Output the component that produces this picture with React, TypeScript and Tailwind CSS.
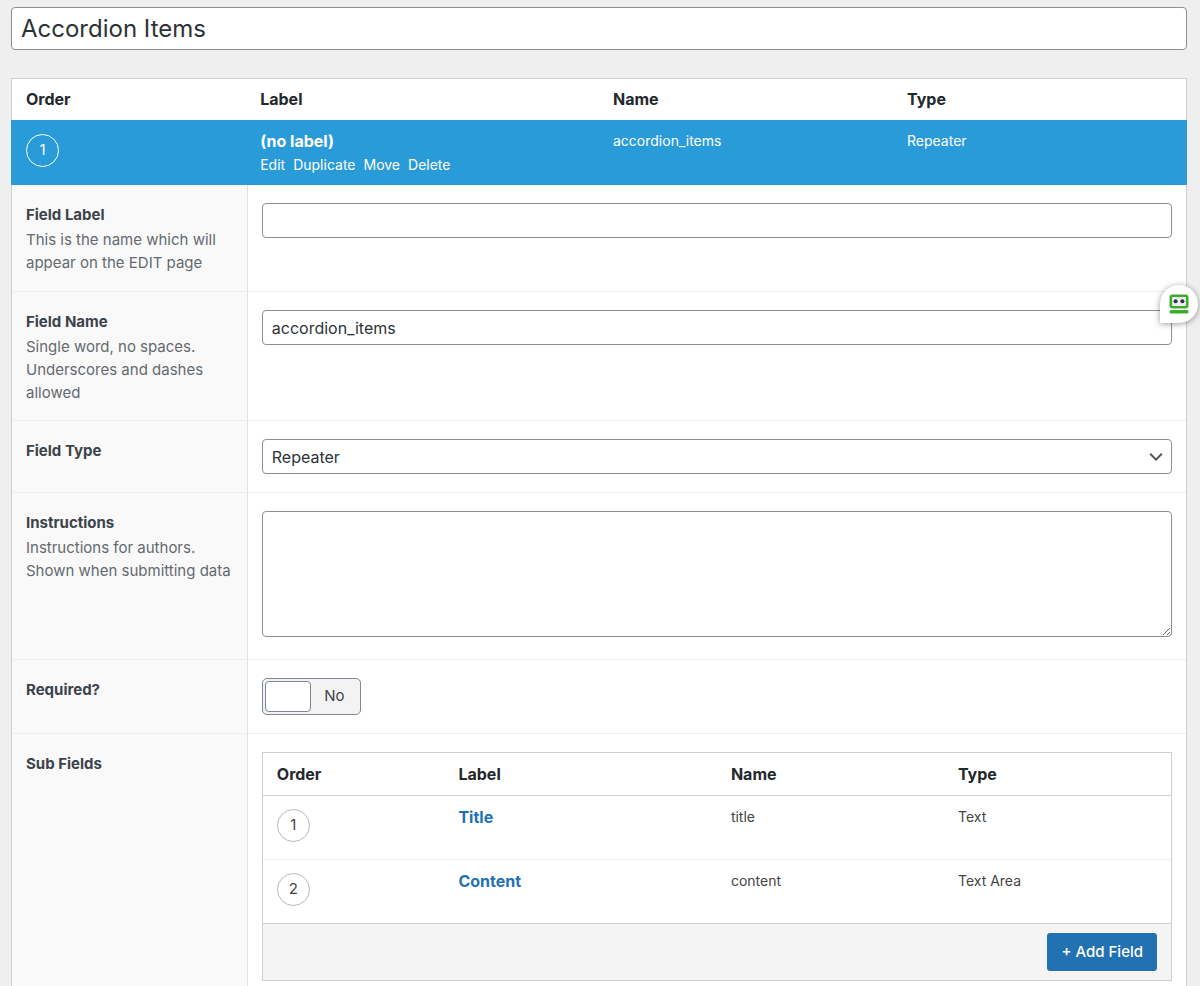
import React, { useState } from "react";

type SubField = {
  label: string;
  name: string;
  type: string;
};

const subFields: SubField[] = [
  { label: "Title", name: "title", type: "Text" },
  { label: "Content", name: "content", type: "Text Area" },
];

const rowActions = ["Edit", "Duplicate", "Move", "Delete"];

const inputClass =
  "block w-full h-[35px] rounded border border-[#8c8f94] bg-white px-[9px] text-base text-[#2c3338]";

const Columns: React.FC = () => (
  <colgroup>
    <col className="w-[20%]" />
    <col className="w-[30%]" />
    <col className="w-[25%]" />
    <col className="w-[25%]" />
  </colgroup>
);

const OrderBadge: React.FC<{ order: number; active?: boolean }> = ({ order, active }) => (
  <span
    className={
      active
        ? "flex size-[33px] items-center justify-center rounded-full border border-white text-[15px] text-white"
        : "flex size-[33px] items-center justify-center rounded-full border border-[#b4b9be] text-[15px] text-[#444444]"
    }
  >
    {order}
  </span>
);

type SettingProps = {
  label: string;
  htmlFor?: string;
  description?: string;
  className: string;
  children: React.ReactNode;
};

const Setting: React.FC<SettingProps> = ({ label, htmlFor, description, className, children }) => (
  <div className={`flex border-b border-[#eeeeee] ${className}`}>
    <div className="w-[calc(20%+1px)] shrink-0 border-r border-[#e1e1e1] bg-[#f9f9f9] pt-[18px] pr-3 pl-3.5 text-[15px] text-[#3c434a]">
      <label htmlFor={htmlFor} className="block leading-[23px] font-bold">
        {label}
      </label>
      {description && <p className="mt-0.5 leading-[23px] text-[#646970]">{description}</p>}
    </div>
    <div className="min-w-0 flex-1 px-3.5 pt-[18px]">{children}</div>
  </div>
);

const RobotBadge: React.FC = () => (
  <button
    type="button"
    aria-label="Fill form"
    className="absolute top-[285px] right-0.5 flex size-[38px] items-center justify-center rounded-full rounded-bl-none bg-white shadow-[0_1px_6px_rgba(0,0,0,0.4)]"
  >
    <svg width="20" height="20" viewBox="0 0 20 20" fill="none">
      <rect x="1.800" y="1.800" width="16.400" height="11.400" rx="1.600" fill="#ececf2" stroke="#3dae2b" strokeWidth="2.600" />
      <circle cx="6.600" cy="7.300" r="2" fill="#2d3440" />
      <circle cx="13.400" cy="7.300" r="2" fill="#2d3440" />
      <rect x="0.500" y="16" width="19" height="3.600" rx="1.600" fill="#3dae2b" />
    </svg>
  </button>
);

const App: React.FC = () => {
  const [title, setTitle] = useState("Accordion Items");
  const [fieldLabel, setFieldLabel] = useState("");
  const [fieldName, setFieldName] = useState("accordion_items");
  const [fieldType, setFieldType] = useState("repeater");
  const [required, setRequired] = useState(false);

  return (
    <div className="relative h-screen overflow-hidden bg-[#efefef] pt-[7px] pr-[13px] pl-[11px] font-['Inter',sans-serif] text-[#444444]">
      <input
        type="text"
        aria-label="Field group title"
        value={title}
        onChange={(e) => setTitle(e.target.value)}
        className="block h-[43px] w-full rounded border border-[#8c8f94] bg-white px-[9px] text-2xl text-[#2c3338]"
      />

      {/* Field list */}
      <table className="mt-7 w-full table-fixed border-separate border-spacing-0 text-left">
        <Columns />
        <thead>
          <tr className="h-[42px] bg-white text-base text-[#23282d] [&>th]:border-t [&>th]:border-[#ccd0d4] [&>th]:px-3.5 [&>th]:pb-px [&>th]:font-bold">
            <th className="border-l">Order</th>
            <th>Label</th>
            <th>Name</th>
            <th className="border-r">Type</th>
          </tr>
        </thead>
        <tbody>
          <tr className="h-[65px] bg-[#2a9bd9] align-top text-white [&>td]:border-[#2a9bd9] [&>td]:px-3.5">
            <td className="border-l pt-3.5">
              <OrderBadge order={1} active />
            </td>
            <td className="pt-2.5">
              <strong className="block text-base leading-[22px] font-bold">(no label)</strong>
              <div className="mt-0.5 flex gap-2 text-sm leading-[22px]">
                {rowActions.map((action) => (
                  <a key={action} href="#">
                    {action}
                  </a>
                ))}
              </div>
            </td>
            <td className="pt-2.5 text-sm leading-[22px]">accordion_items</td>
            <td className="border-r pt-2.5 text-sm leading-[22px]">Repeater</td>
          </tr>
        </tbody>
      </table>

      {/* Field settings */}
      <div className="border-x border-[#ccd0d4] bg-white">
        <Setting
          label="Field Label"
          htmlFor="field-label"
          description="This is the name which will appear on the EDIT page"
          className="h-[107px]"
        >
          <input
            id="field-label"
            type="text"
            value={fieldLabel}
            onChange={(e) => setFieldLabel(e.target.value)}
            className={inputClass}
          />
        </Setting>

        <Setting
          label="Field Name"
          htmlFor="field-name"
          description="Single word, no spaces. Underscores and dashes allowed"
          className="h-[129px]"
        >
          <input
            id="field-name"
            type="text"
            value={fieldName}
            onChange={(e) => setFieldName(e.target.value)}
            className={inputClass}
          />
        </Setting>

        <Setting label="Field Type" htmlFor="field-type" className="h-[72px]">
          <div className="relative">
            <select
              id="field-type"
              value={fieldType}
              onChange={(e) => setFieldType(e.target.value)}
              className={`${inputClass} appearance-none`}
            >
              <option value="repeater">Repeater</option>
              <option value="text">Text</option>
              <option value="textarea">Text Area</option>
            </select>
            <svg
              className="pointer-events-none absolute top-2.5 right-2 size-4"
              viewBox="0 0 16 16"
              fill="none"
              stroke="#50575e"
              strokeWidth="2"
            >
              <path d="M2.200 4.800 8 10.600l5.800-5.800" />
            </svg>
          </div>
        </Setting>

        <Setting
          label="Instructions"
          htmlFor="instructions"
          description="Instructions for authors. Shown when submitting data"
          className="h-[167px]"
        >
          <textarea
            id="instructions"
            className="block h-[126px] w-full resize-y rounded border border-[#8c8f94] bg-white px-[9px] py-1 text-base text-[#2c3338]"
          />
        </Setting>

        <Setting label="Required?" htmlFor="required" className="h-[74px]">
          <label className="flex h-[37px] w-[99px] cursor-pointer items-center rounded-[5px] border border-[#7e8993] bg-[#f3f3f3] p-0.5">
            <input
              id="required"
              type="checkbox"
              checked={required}
              onChange={(e) => setRequired(e.target.checked)}
              className="peer sr-only"
            />
            <span className="h-[31px] w-[46px] rounded border border-[#7e8993] bg-white peer-checked:order-2" />
            <span className="flex-1 text-center text-[15px]">{required ? "Yes" : "No"}</span>
          </label>
        </Setting>

        <Setting label="Sub Fields" className="min-h-[270px]">
          <div className="border border-[#ccd0d4]">
            <table className="w-full table-fixed border-separate border-spacing-0 text-left">
              <Columns />
              <thead>
                <tr className="h-[43px] text-base text-[#23282d] [&>th]:border-b [&>th]:border-[#ccd0d4] [&>th]:px-3.5 [&>th]:font-bold">
                  <th>Order</th>
                  <th>Label</th>
                  <th>Name</th>
                  <th>Type</th>
                </tr>
              </thead>
              <tbody>
                {subFields.map((field, index) => (
                  <tr
                    key={field.name}
                    className="h-16 align-top [&>td]:border-b [&>td]:border-[#eeeeee] [&>td]:px-3.5 last:[&>td]:border-[#ccd0d4]"
                  >
                    <td className="pt-[13px]">
                      <OrderBadge order={index + 1} />
                    </td>
                    <td className="pt-2.5 text-base leading-[22px] font-bold text-[#2271b1]">
                      <a href="#">{field.label}</a>
                    </td>
                    <td className="pt-2.5 text-sm leading-[22px]">{field.name}</td>
                    <td className="pt-2.5 text-sm leading-[22px]">{field.type}</td>
                  </tr>
                ))}
              </tbody>
            </table>
            <div className="flex justify-end bg-[#f4f4f4] px-3.5 py-[9px]">
              <button
                type="button"
                className="h-[38px] rounded-[3px] bg-[#2271b1] px-3.5 text-[15px] font-medium text-white"
              >
                + Add Field
              </button>
            </div>
          </div>
        </Setting>
      </div>

      <RobotBadge />
    </div>
  );
};

export default App;
